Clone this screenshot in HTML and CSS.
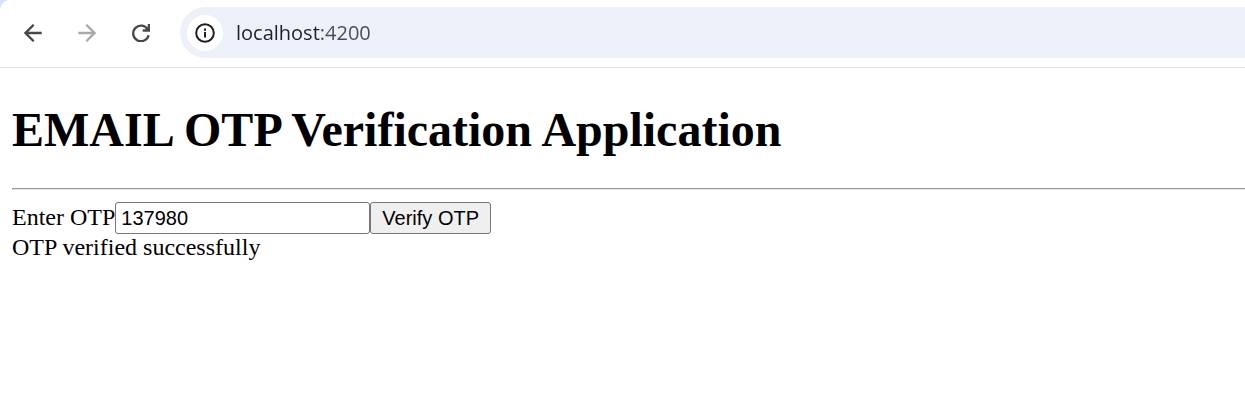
FILE: index.html
```html
<!DOCTYPE html>
<html lang="en">
<head>
<meta charset="utf-8">
<meta name="viewport" content="width=device-width, initial-scale=1">
<title>EMAIL OTP Verification Application</title>
<link rel="stylesheet" href="styles.css">
</head>
<body>
<div class="frame">
<header class="toolbar">
  <nav class="nav" aria-label="Browser navigation">
    <button class="nav-button" type="button" aria-label="Back">
      <svg class="icon" viewBox="0 0 18 18"><path d="M17.7 9H1.5M9.7 .8L1.5 9l8.2 8.2"/></svg>
    </button>
    <button class="nav-button" type="button" aria-label="Forward" disabled>
      <svg class="icon" viewBox="0 0 18 18"><path d="M.3 9h16.2M8.3 .8L16.5 9l-8.2 8.2"/></svg>
    </button>
    <button class="nav-button" type="button" aria-label="Reload">
      <svg class="icon" viewBox="0 0 18 18"><path d="M15.8 5.6A7.8 7.8 0 1 0 16.6 11.2M16.9 0v6.5h-6.2M16.4 6L13.6 3.2"/></svg>
    </button>
  </nav>
  <div class="address">
    <button class="site-info" type="button" aria-label="View site information">
      <svg class="info-icon" viewBox="0 0 20 20"><circle cx="10" cy="10" r="8.8"/><path d="M10 9v5.4M10 5.5v2.2"/></svg>
    </button>
    <input class="url" type="text" value="localhost:4200" aria-label="Address" spellcheck="false">
  </div>
</header>
<main class="page">
  <h1 class="title">EMAIL OTP Verification Application</h1>
  <hr class="rule">
  <form class="otp-form">
    <label for="otp">Enter OTP</label>
    <input class="otp-input" id="otp" type="text" value="137980">
    <button class="verify" type="button">Verify OTP</button>
  </form>
  <div class="status" role="status">OTP verified successfully</div>
</main>
</div>
</body>
</html>
```
FILE: styles.css
```css
* {
  box-sizing: border-box;
}

body {
  margin: 0;
  background: #d3e3fd;
  color: #000;
  font-family: "Liberation Serif", "Times New Roman", serif;
  font-size: 24px;
  line-height: 26px;
}

.frame {
  min-height: 100vh;
  background: #fff;
  border-top-left-radius: 10px;
}

.toolbar {
  display: flex;
  align-items: center;
  padding: 7px 0 9px 15px;
  border-bottom: 1px solid #e1e3e6;
}

.nav {
  display: flex;
  gap: 18px;
  margin-right: 21px;
}

.nav-button {
  display: grid;
  place-items: center;
  width: 36px;
  height: 36px;
  padding: 0;
  border: 0;
  border-radius: 50%;
  background: none;
  color: #474747;
}

.nav-button:disabled {
  color: #a9a9a9;
}

.icon {
  width: 18px;
  height: 18px;
  fill: none;
  stroke: currentColor;
  stroke-width: 2.3;
}

.address {
  display: flex;
  flex: 1;
  align-items: center;
  gap: 13px;
  height: 51px;
  padding-left: 7px;
  border-radius: 26px 0 0 26px;
  background: #ecf0f9;
}

.site-info {
  display: grid;
  place-items: center;
  width: 36px;
  height: 36px;
  padding: 0;
  border: 0;
  border-radius: 50%;
  background: #fff;
  color: #1f1f1f;
}

.info-icon {
  width: 20px;
  height: 20px;
  fill: none;
  stroke: currentColor;
  stroke-width: 2;
}

.url {
  flex: 1;
  min-width: 0;
  padding: 0;
  border: 0;
  outline: 0;
  background: linear-gradient(to right, #1f2023 84px, #474b50 84px);
  background-clip: text;
  color: transparent;
  caret-color: #1f2023;
  font-family: "Segoe UI", "Open Sans", sans-serif;
  font-size: 20px;
  line-height: 28px;
}

.page {
  padding: 0 0 12px 12px;
}

.title {
  margin: 34px 0 30px;
  font-size: 48px;
  line-height: 56px;
}

.rule {
  height: 2px;
  margin: 0 0 12px;
  border: 1px solid #9a9a9a;
  border-bottom-color: #e4e4e4;
  border-right: 0;
}

.otp-form {
  display: flex;
  align-items: center;
}

.otp-form label {
  padding-bottom: 2px;
}

.otp-input,
.verify {
  height: 32px;
  border: 1px solid #767676;
  border-radius: 3px;
  color: #000;
  font-family: "Liberation Sans", Arial, sans-serif;
  font-size: 20px;
}

.otp-input {
  width: 255px;
  padding: 0 5px;
  background: #fff;
}

.verify {
  padding: 0 11px;
  background: #efefef;
}
```
